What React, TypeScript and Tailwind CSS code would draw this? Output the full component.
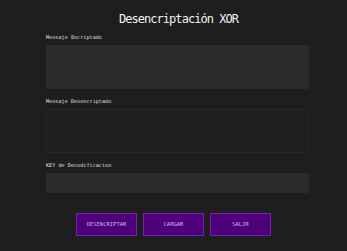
import React from "react";

export default function App() {
  const mono = { fontFamily: '"DejaVu Sans Mono", "Liberation Mono", monospace' };
  return (
    <div className="w-[347px] h-[251px] bg-[#1e1e1e] overflow-hidden" style={mono}>
      <div className="pl-[46px] w-[309px] flex flex-col">
        <div className="mt-[13px] h-[12px] leading-[12px] text-[12px] tracking-[-0.95px] text-center text-[#f2f2f2] pl-[2px]">
          Desencriptación XOR
        </div>
        <div className="mt-[9px] h-[6px] leading-[6px] text-[5px] tracking-[0.1px] text-[#e4e4e4]">Mensaje Encriptado</div>
        <div className="mt-[5px] h-[44px] bg-[#2b2b2b] rounded-[2px]" />
        <div className="mt-[9px] h-[6px] leading-[6px] text-[5px] tracking-[0.1px] text-[#e4e4e4]">Mensaje Desencriptado</div>
        <div className="mt-[5px] h-[44px] bg-[#1e1e1e] border border-[#282828] rounded-[2px]" />
        <div className="mt-[9px] h-[6px] leading-[6px] text-[5px] tracking-[0.1px] text-[#e4e4e4]">KEY de Decodificacion</div>
        <div className="mt-[5px] h-[20px] bg-[#2b2b2b] rounded-[2px]" />
        <div className="mt-[20px] flex justify-center gap-[6px] pr-[8px]">
          {["DESENCRIPTAR", "CARGAR", "SALIR"].map((t) => (
            <div
              key={t}
              className="w-[61px] h-[23px] bg-[#4e007a] border border-[#7a1fb0] flex items-center justify-center text-[5.5px] text-[#d4aef2]"
            >
              {t}
            </div>
          ))}
        </div>
      </div>
    </div>
  );
}
